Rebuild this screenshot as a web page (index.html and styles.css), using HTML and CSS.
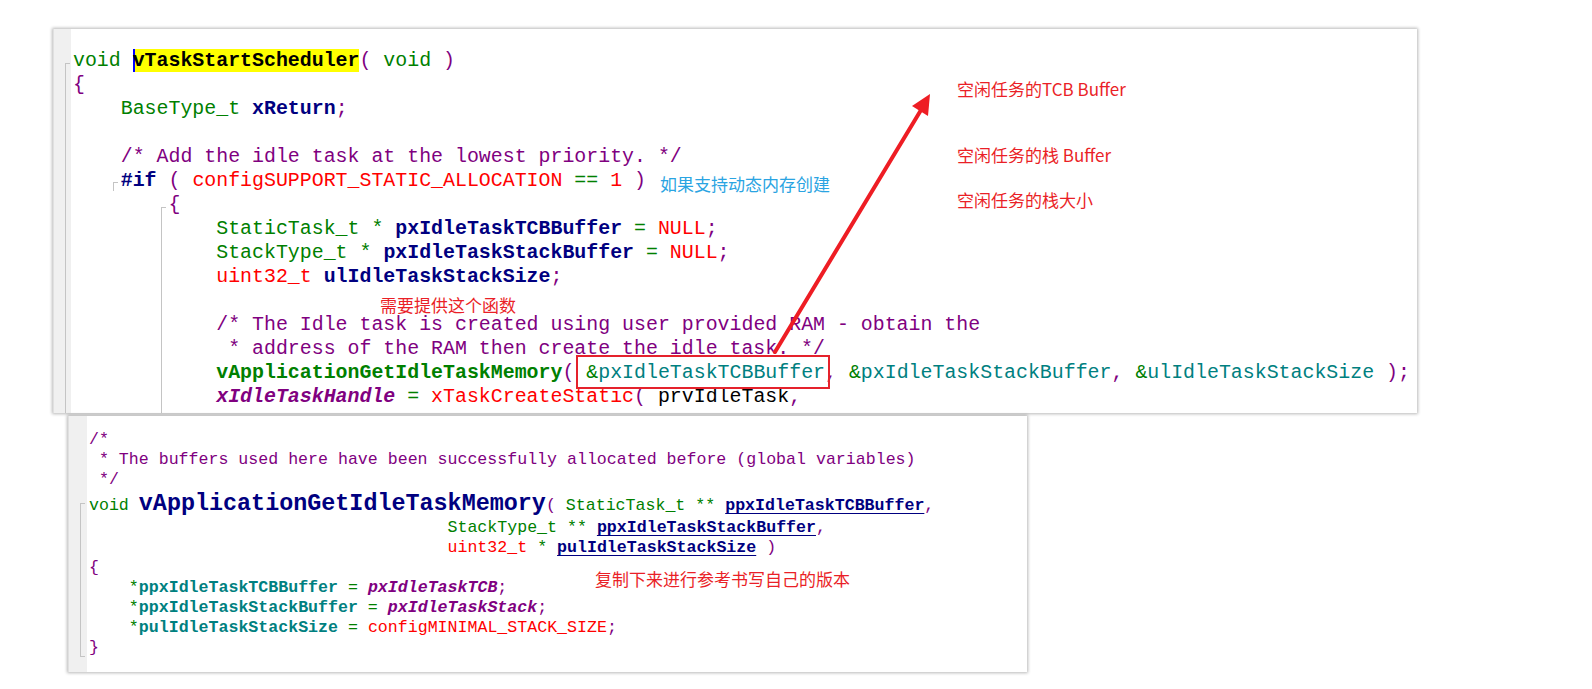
FILE: index.html
```html
<!DOCTYPE html>
<html lang="zh-CN">
<head>
<meta charset="utf-8">
<title>vTaskStartScheduler</title>
<link rel="stylesheet" href="styles.css">
</head>
<body>
<div class="canvas">
  <section class="panel panel-top">
    <div class="gutter"></div>
    <span class="fold fold-a"></span>
    <span class="fold fold-b"></span>
    <span class="fold fold-c"></span>
<pre class="code code-lg"><span class="k">void</span> <span class="hl">vTaskStartScheduler</span><span class="p">(</span> <span class="k">void</span> <span class="p">)</span>
<span class="p">{</span>
    <span class="k">BaseType_t</span> <span class="n">xReturn</span><span class="p">;</span>

    <span class="c">/* Add the idle task at the lowest priority. */</span>
    <span class="n">#if</span> <span class="p">(</span> <span class="r">configSUPPORT_STATIC_ALLOCATION</span> <span class="k">==</span> <span class="r">1</span> <span class="p">)</span>
        <span class="p">{</span>
            <span class="k">StaticTask_t</span> <span class="k">*</span> <span class="n">pxIdleTaskTCBBuffer</span> <span class="k">=</span> <span class="r">NULL</span><span class="p">;</span>
            <span class="k">StackType_t</span> <span class="k">*</span> <span class="n">pxIdleTaskStackBuffer</span> <span class="k">=</span> <span class="r">NULL</span><span class="p">;</span>
            <span class="r">uint32_t</span> <span class="n">ulIdleTaskStackSize</span><span class="p">;</span>

            <span class="c">/* The Idle task is created using user provided RAM - obtain the</span>
<span class="c">             * address of the RAM then create the idle task. */</span>
            <span class="kb">vApplicationGetIdleTaskMemory</span><span class="p">(</span> <span class="k">&amp;</span><span class="t">pxIdleTaskTCBBuffer</span><span class="p">,</span> <span class="k">&amp;</span><span class="t">pxIdleTaskStackBuffer</span><span class="p">,</span> <span class="k">&amp;</span><span class="t">ulIdleTaskStackSize</span> <span class="p">);</span>
            <span class="i">xIdleTaskHandle</span> <span class="k">=</span> <span class="r">xTaskCreateStatic</span><span class="p">(</span> <span class="b">prvIdleTask</span><span class="p">,</span></pre>
  </section>

  <section class="panel panel-bottom">
    <div class="gutter"></div>
    <span class="fold fold-d"></span>
<pre class="code code-sm"><span class="c">/*</span>
<span class="c"> * The buffers used here have been successfully allocated before (global variables)</span>
<span class="c"> */</span>
<span class="line-big"><span class="k">void</span> <span class="big">vApplicationGetIdleTaskMemory</span><span class="p">(</span> <span class="k">StaticTask_t</span> <span class="k">**</span> <span class="u">ppxIdleTaskTCBBuffer</span><span class="p">,</span></span>
                                    <span class="k">StackType_t</span> <span class="k">**</span> <span class="u">ppxIdleTaskStackBuffer</span><span class="p">,</span>
                                    <span class="r">uint32_t</span> <span class="k">*</span> <span class="u">pulIdleTaskStackSize</span> <span class="p">)</span>
<span class="p">{</span>
    <span class="k">*</span><span class="tb">ppxIdleTaskTCBBuffer</span> <span class="k">=</span> <span class="i">pxIdleTaskTCB</span><span class="p">;</span>
    <span class="k">*</span><span class="tb">ppxIdleTaskStackBuffer</span> <span class="k">=</span> <span class="i">pxIdleTaskStack</span><span class="p">;</span>
    <span class="k">*</span><span class="tb">pulIdleTaskStackSize</span> <span class="k">=</span> <span class="r">configMINIMAL_STACK_SIZE</span><span class="p">;</span>
<span class="p">}</span></pre>
  </section>

  <div class="note note-red note-tcb">空闲任务的TCB Buffer</div>
  <div class="note note-red note-stack">空闲任务的栈 Buffer</div>
  <div class="note note-red note-size">空闲任务的栈大小</div>
  <div class="note note-blue note-if">如果支持动态内存创建</div>
  <div class="note note-red note-need">需要提供这个函数</div>
  <div class="note note-red note-copy">复制下来进行参考书写自己的版本</div>

  <div class="mark-box"></div>
  <svg class="arrow" width="1592" height="689" viewBox="0 0 1592 689">
    <line x1="775" y1="352" x2="921" y2="110" stroke="#ee1d24" stroke-width="4" stroke-linecap="round"/>
    <polygon points="930,94 912,106 928,116" fill="#ee1d24"/>
  </svg>
</div>
</body>
</html>
```
FILE: styles.css
```css
html, body {
  margin: 0;
  padding: 0;
  background: #ffffff;
}

.canvas {
  position: relative;
  width: 1592px;
  height: 689px;
  overflow: hidden;
}

.panel {
  position: relative;
  display: flex;
  background: #ffffff;
  box-shadow: 0 0 3px 1px rgba(0, 0, 0, 0.28);
  overflow: hidden;
}

.panel-top {
  margin: 29px 0 0 53px;
  width: 1364px;
  height: 384px;
}

.panel-bottom {
  margin: 3px 0 0 68px;
  width: 959px;
  height: 256px;
}

.gutter {
  flex: 0 0 auto;
  background: #f0f0f0;
  border-left: 1px solid #e0e0e0;
}

.panel-top .gutter { width: 17px; }
.panel-bottom .gutter { width: 18px; }

.code {
  margin: 0;
  white-space: pre;
  font-family: "Liberation Mono", "DejaVu Sans Mono", monospace;
  color: #000000;
}

.code-lg {
  padding: 20px 0 0 2px;
  font-size: 19.9px;
  line-height: 24px;
}

.code-sm {
  padding: 14px 0 0 2px;
  font-size: 16.6px;
  line-height: 20px;
}

.line-big {
  display: inline-block;
  height: 28px;
  line-height: 28px;
  vertical-align: top;
}

.big {
  font-size: 23.4px;
  font-weight: bold;
  color: #000080;
}

.k { color: #008000; }
.kb { color: #008000; font-weight: bold; }
.p { color: #800080; }
.n { color: #000080; font-weight: bold; }
.r { color: #ff0000; }
.t { color: #008080; }
.tb { color: #008080; font-weight: bold; }
.c { color: #800080; }
.b { color: #000000; }
.i { color: #800080; font-weight: bold; font-style: italic; }
.u {
  color: #000080;
  font-weight: bold;
  text-decoration: underline;
  text-decoration-thickness: 1px;
  text-underline-offset: 3px;
}

.hl {
  display: inline-block;
  height: 23px;
  line-height: 24px;
  vertical-align: top;
  background: #ffff00;
  font-weight: bold;
  box-shadow: inset 2px 0 0 #0000ff;
}

/* code folding markers */
.fold {
  position: absolute;
  border-left: 1px solid #c4c4c4;
  border-top: 1px solid #c4c4c4;
  width: 4px;
}

.fold-a { left: 12px; top: 34px; bottom: 0; }
.fold-b { left: 60px; top: 153px; height: 8px; }
.fold-c { left: 108px; top: 178px; bottom: 0; }
.fold-d {
  left: 12px;
  top: 87px;
  height: 152px;
  border-bottom: 1px solid #c4c4c4;
}

/* annotations */
.note {
  position: absolute;
  font-family: "Noto Sans CJK SC", "Noto Sans", sans-serif;
  font-size: 17px;
  line-height: 17px;
  white-space: nowrap;
}

.note-red { color: #ea1f27; }
.note-blue { color: #2aa4e2; }

.note-tcb { left: 957px; top: 80px; }
.note-stack { left: 957px; top: 146px; }
.note-size { left: 957px; top: 191px; }
.note-if { left: 660px; top: 175px; }
.note-need { left: 380px; top: 297px; line-height: 15px; }
.note-copy { left: 595px; top: 570px; }

.mark-box {
  position: absolute;
  left: 576px;
  top: 355px;
  width: 254px;
  height: 34px;
  box-sizing: border-box;
  border: 2px solid #e5222c;
}

.arrow {
  position: absolute;
  left: 0;
  top: 0;
  pointer-events: none;
}
```
